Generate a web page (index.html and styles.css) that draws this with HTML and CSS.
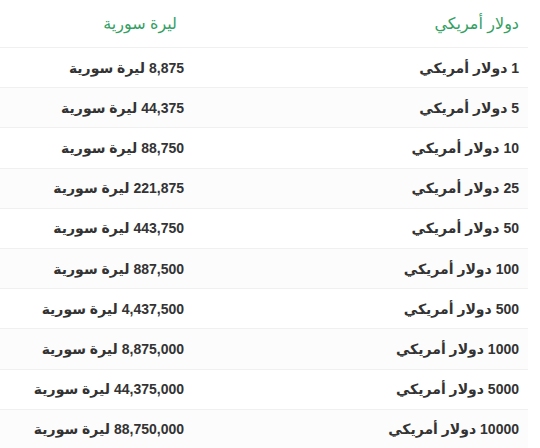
FILE: index.html
```html
<!DOCTYPE html>
<html lang="ar" dir="rtl">
<head>
<meta charset="utf-8">
<link rel="stylesheet" href="styles.css">
</head>
<body>
<table class="rates">
  <thead>
    <tr><th class="c1">دولار أمريكي</th><th class="c2">ليرة سورية</th></tr>
  </thead>
  <tbody>
    <tr><td>1 دولار أمريكي</td><td>8,875 ليرة سورية</td></tr>
    <tr><td>5 دولار أمريكي</td><td>44,375 ليرة سورية</td></tr>
    <tr><td>10 دولار أمريكي</td><td>88,750 ليرة سورية</td></tr>
    <tr><td>25 دولار أمريكي</td><td>221,875 ليرة سورية</td></tr>
    <tr><td>50 دولار أمريكي</td><td>443,750 ليرة سورية</td></tr>
    <tr><td>100 دولار أمريكي</td><td>887,500 ليرة سورية</td></tr>
    <tr><td>500 دولار أمريكي</td><td>4,437,500 ليرة سورية</td></tr>
    <tr><td>1000 دولار أمريكي</td><td>8,875,000 ليرة سورية</td></tr>
    <tr><td>5000 دولار أمريكي</td><td>44,375,000 ليرة سورية</td></tr>
    <tr><td>10000 دولار أمريكي</td><td>88,750,000 ليرة سورية</td></tr>
  </tbody>
</table>
</body>
</html>
```
FILE: styles.css
```css
html, body {
  margin: 0;
  padding: 0;
  background: #fff;
}
body {
  font-family: "Liberation Sans", "DejaVu Sans", sans-serif;
  direction: rtl;
  padding-right: 12px;
}
.rates {
  width: 528px;
  border-collapse: collapse;
  table-layout: fixed;
}
.rates th {
  font-weight: normal;
  font-size: 16px;
  color: #33a062;
  text-align: right;
  height: 47px;
  padding: 0 9px;
  border-bottom: 1px solid #f0f0f0;
  vertical-align: middle;
}
.rates th.c1 { width: 317px; }
.rates th.c2 { padding-right: 16px; }
.rates td {
  font-size: 14px;
  font-weight: bold;
  color: #333;
  text-align: right;
  padding: 9.6px 9px;
  line-height: 20px;
  letter-spacing: 0.2px;
  border-bottom: 1px solid #f0f0f0;
  white-space: nowrap;
}
.rates tbody tr:nth-child(even) td {
  background: #fcfcfc;
}
```
